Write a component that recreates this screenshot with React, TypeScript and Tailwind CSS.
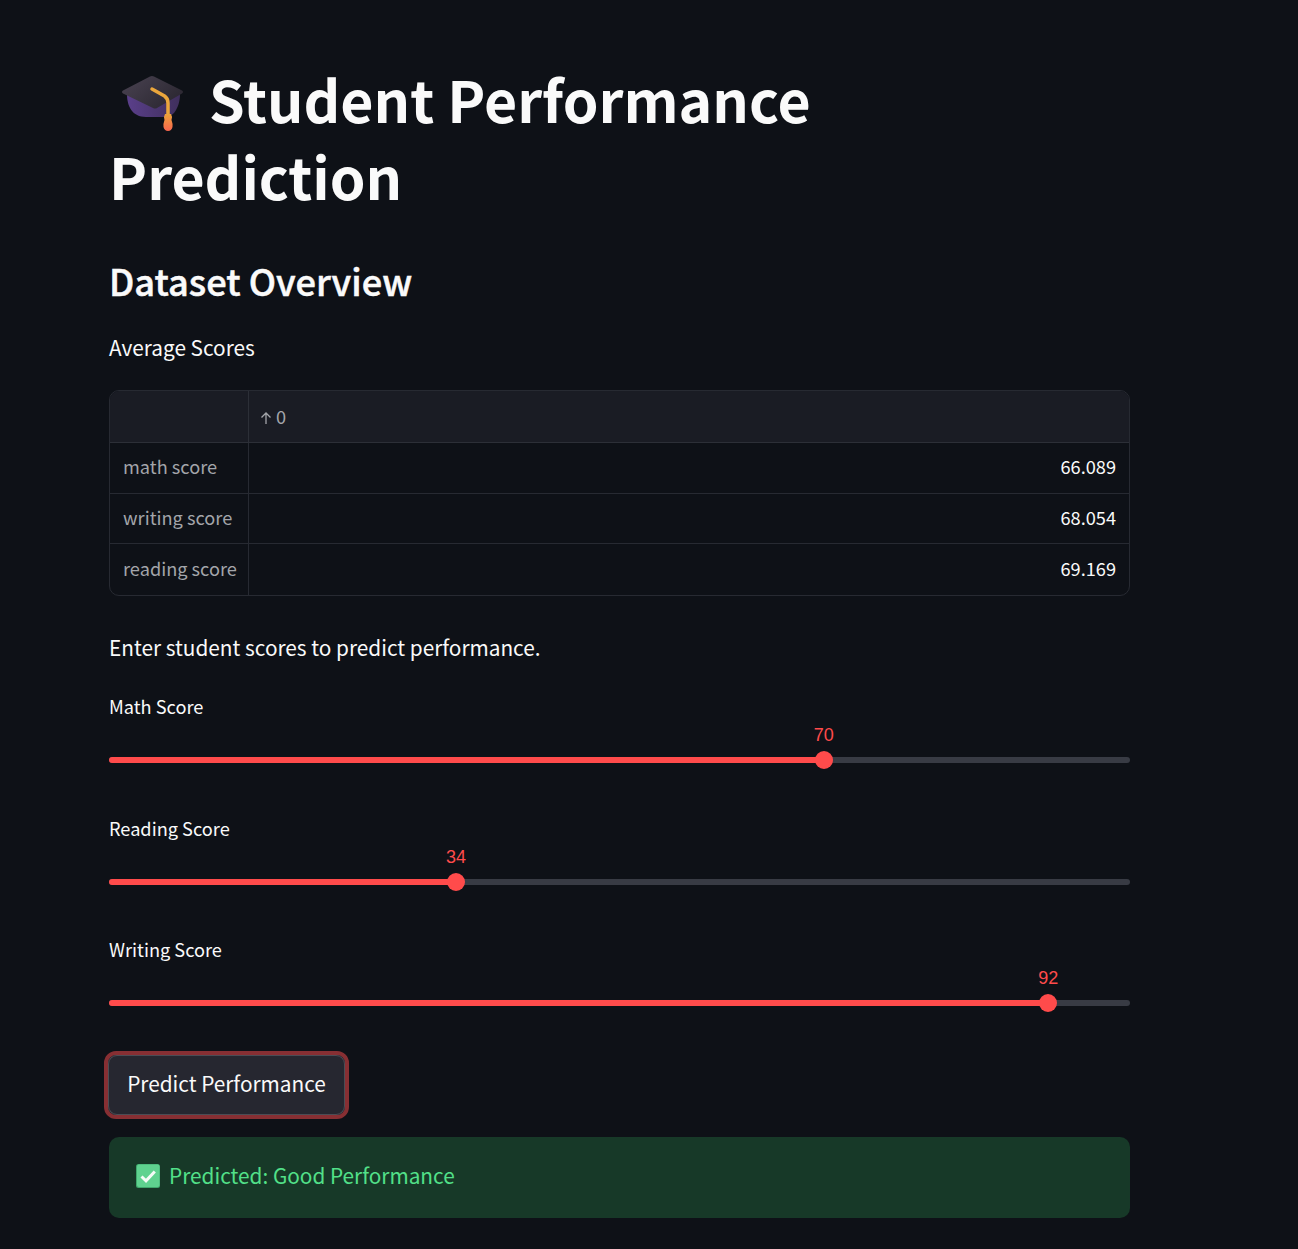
const font = "font-['Noto_Sans_CJK_SC','Source_Sans_Pro',sans-serif]";

const rows = [
  { name: "math score", value: "66.089" },
  { name: "writing score", value: "68.054" },
  { name: "reading score", value: "69.169" },
];

const sliders = [
  { label: "Math Score", value: 70, cls: "h-[122px]" },
  { label: "Reading Score", value: 34, cls: "h-[121.400px]" },
  { label: "Writing Score", value: 92, cls: "h-[116.600px]" },
];

function GradCap() {
  return (
    <svg width="66" height="60" viewBox="0 0 66 60" className="shrink-0">
      <defs>
        <linearGradient id="board" x1="0" y1="0" x2="1" y2="0.600">
          <stop offset="0" stopColor="#4a4352" />
          <stop offset="1" stopColor="#2c2832" />
        </linearGradient>
        <linearGradient id="skull" x1="0" y1="0" x2="1" y2="0">
          <stop offset="0" stopColor="#5a3f8a" />
          <stop offset="1" stopColor="#3f2f5c" />
        </linearGradient>
        <linearGradient id="tassel" x1="0" y1="0" x2="0" y2="1">
          <stop offset="0" stopColor="#eda33a" />
          <stop offset="1" stopColor="#f8654e" />
        </linearGradient>
      </defs>
      <path d="M7 20 C7 32 12 43 26 43 H46 C54 43 60 32 60 20 Z" fill="url(#skull)" />
      <path d="M30 2.500 Q32 1.500 34 2.500 L62 16.500 Q64 18 62 19.500 L37 34 Q35 35 33 34 L3 19.500 Q1 18 3 16.500 Z" fill="url(#board)" />
      <path d="M32 15 L44.500 22 Q48 24.500 48 29 V41" fill="none" stroke="#eba63c" strokeWidth="3.500" strokeLinecap="round" />
      <path d="M45 40 H51 Q52.500 42 51.500 46 Q53 50 52.500 53 Q51.500 57 48 57 Q44.500 57 43.500 53 Q43 50 44.500 46 Q43.500 42 45 40 Z" fill="url(#tassel)" />
    </svg>
  );
}

function CheckEmoji() {
  return (
    <svg width="24" height="24" viewBox="0 0 24 24" className="shrink-0">
      <rect x="0" y="0" width="24" height="24" rx="2.500" fill="#3fa86c" />
      <rect x="1" y="0.500" width="22.500" height="22.500" rx="2" fill="#5fd28f" />
      <path d="M5.500 12.500 L10 16.800 L18.800 7.500" fill="none" stroke="#f4fbf6" strokeWidth="3" />
    </svg>
  );
}

function ScoreSlider({ label, value, cls }: { label: string; value: number; cls: string }) {
  return (
    <div className={cls}>
      <p className="text-[18.200px] leading-[28px] text-[#fafafa] h-[40px]">{label}</p>
      <div className="relative h-[6px] mt-[25px] rounded-full bg-[#383b44]">
        <div className="h-full rounded-full bg-[#ff4b4b]" style={{ width: `${value}%` }} />
        <div
          className="absolute top-[-6px] w-[18px] h-[18px] -ml-[9px] rounded-full bg-[#ff4b4b]"
          style={{ left: `${value}%` }}
        />
        <span
          className="absolute top-[-34px] -translate-x-1/2 text-[18px] leading-[24px] text-[#ff4b4b] font-['Liberation_Sans',sans-serif]"
          style={{ left: `${value}%` }}
        >
          {value}
        </span>
      </div>
    </div>
  );
}

export default function App() {
  return (
    <div className={`min-h-[1249px] bg-[#0e1117] text-[#fafafa] ${font}`}>
      <div className="w-[1021px] ml-[109px] pt-[60px]">
        <h1 className="text-[57.200px] leading-[77px] font-bold">
          <span className="inline-flex items-center align-middle ml-[11px] mr-[23px] -mt-[6px]">
            <GradCap />
          </span>
          <span>Student Performance</span>
          <br />
          Prediction
        </h1>
        <h2 className="text-[36.200px] leading-[48px] font-medium mt-[42px] [-webkit-text-stroke:0.5px_#fafafa]">
          Dataset Overview
        </h2>
        <p className="text-[20.800px] leading-[32px] mt-[27px]">Average Scores</p>

        <div className="mt-[27px] border border-[#272a32] rounded-[10px] overflow-hidden text-[18.200px]">
          <div className="flex h-[52px] bg-[#1a1c24] border-b border-[#2c2f37]">
            <div className="w-[139px] border-r border-[#2c2f37]" />
            <div className="flex items-center pl-[10px] text-[#a3a5aa]">
              <svg width="14" height="14" viewBox="0 0 14 14" className="mr-[3px] mt-[2px]">
                <path d="M7 13 V2 M2.500 6.500 L7 2 L11.500 6.500" fill="none" stroke="#a3a5aa" strokeWidth="1.300" />
              </svg>
              0
            </div>
          </div>
          {rows.map((r, i) => (
            <div key={r.name} className={`flex h-[50.500px] pb-[2px] ${i < 2 ? "border-b border-[#272a32]" : ""}`}>
              <div className="w-[139px] -mb-[2px] pb-[2px] flex items-center pl-[13px] border-r border-[#272a32] text-[#a3a5aa] whitespace-nowrap">
                {r.name}
              </div>
              <div className="flex-1 flex items-center justify-end pr-[13px]">{r.value}</div>
            </div>
          ))}
        </div>

        <p className="text-[20.800px] leading-[32px] mt-[35px]">Enter student scores to predict performance.</p>

        <div className="mt-[29px]">
          {sliders.map((s) => (
            <ScoreSlider key={s.label} {...s} />
          ))}
        </div>

        <button className="block -ml-[5px] w-[245px] h-[68px] rounded-[12px] border-[4px] border-[#872f33] bg-[#262730] text-[20.800px] leading-none">
          <span className="block rounded-[9px] border border-[#4b4d55] h-full leading-[54px]">Predict Performance</span>
        </button>

        <div className="mt-[18px] h-[81px] pb-[4px] rounded-[10px] bg-[#173928] flex items-center pl-[27px] text-[20.800px] text-[#52e089]">
          <CheckEmoji />
          <span className="ml-[9px]">Predicted: Good Performance</span>
        </div>
      </div>
    </div>
  );
}
